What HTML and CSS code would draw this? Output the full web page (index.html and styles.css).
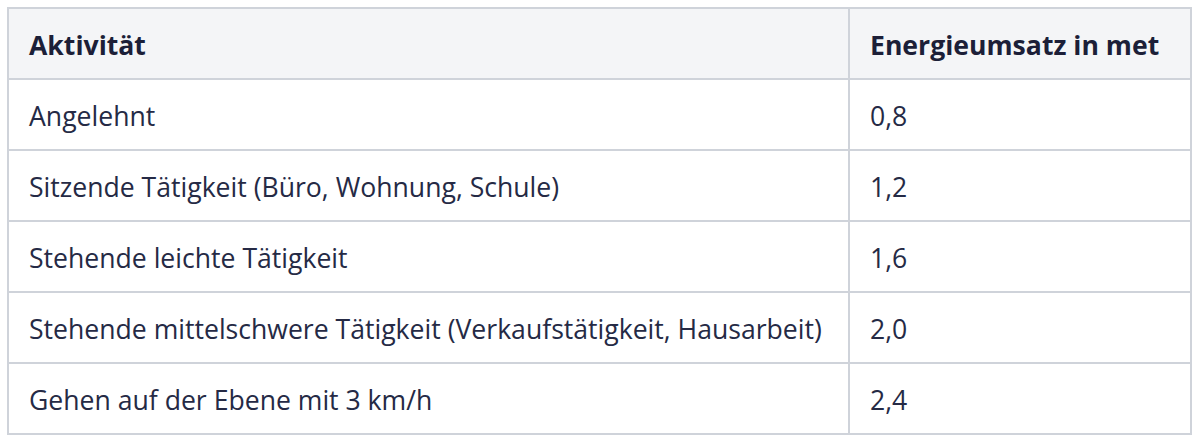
FILE: index.html
```html
<!DOCTYPE html>
<html lang="de">
<head>
<meta charset="utf-8">
<link rel="stylesheet" href="styles.css">
</head>
<body>
<table class="data">
  <thead>
    <tr><th class="c1">Aktivität</th><th class="c2">Energieumsatz in met</th></tr>
  </thead>
  <tbody>
    <tr><td>Angelehnt</td><td>0,8</td></tr>
    <tr><td>Sitzende Tätigkeit (Büro, Wohnung, Schule)</td><td>1,2</td></tr>
    <tr><td>Stehende leichte Tätigkeit</td><td>1,6</td></tr>
    <tr><td>Stehende mittelschwere Tätigkeit (Verkaufstätigkeit, Hausarbeit)</td><td>2,0</td></tr>
    <tr><td>Gehen auf der Ebene mit 3 km/h</td><td>2,4</td></tr>
  </tbody>
</table>
</body>
</html>
```
FILE: styles.css
```css
html, body {
  margin: 0;
  background: #ffffff;
}
body {
  padding: 7px 8px 0 7px;
}
.data {
  width: 1185px;
  border-collapse: collapse;
  font-family: "Open Sans", "Noto Sans", sans-serif;
  font-size: 26.6px;
  color: #252a45;
}
.data th, .data td {
  border: 2px solid #cfd3da;
  height: 66px;
  padding: 3px 20px 0 20px;
  text-align: left;
  vertical-align: middle;
}
.data th {
  background: #f4f5f7;
  font-weight: 700;
  color: #1c1f38;
}
.data .c1 {
  width: 799px;
}
```
